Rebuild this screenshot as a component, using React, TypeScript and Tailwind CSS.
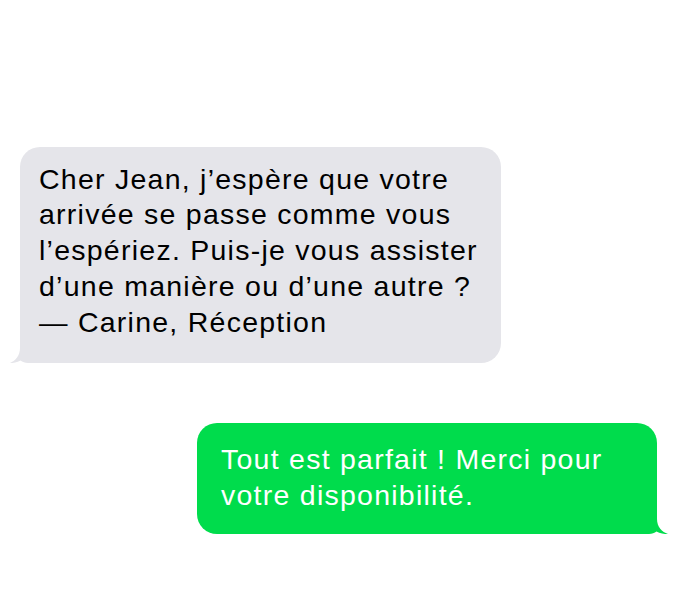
export default function App() {
  return (
    <div className="flex min-h-[616px] w-[689px] flex-col bg-white pt-[147px] font-['Liberation_Sans',Arial,sans-serif] text-[28.5px] leading-[35.75px] tracking-[1.25px]">
      {/* incoming */}
      <div className="relative ml-[20px] w-[481px] rounded-[20px] bg-[#e5e5ea] pb-[23px] pl-[19px] pr-[18px] pt-[14.5px] text-black">
        <p>
          Cher Jean, j’espère que votre arrivée se passe comme vous
          l’espériez. Puis-je vous assister d’une manière ou d’une autre ?
          <br />— Carine, Réception
        </p>
        <svg
          className="absolute bottom-0 left-[-10px]"
          width="30"
          height="24"
          viewBox="0 0 30 24"
        >
          <path
            d="M10 0 L30 0 L30 24 L18 24 C15 24 12.5 23 10.5 21.5 C7 23.5 3 24 0 24 C5 22 10 17 10 9 Z"
            fill="#e5e5ea"
          />
        </svg>
      </div>

      {/* outgoing */}
      <div className="relative ml-[197px] mt-[60px] w-[460px] rounded-[20px] bg-[#00dc4c] pb-[21px] pl-[24px] pr-[14px] pt-[18.5px] text-white">
        <p>Tout est parfait ! Merci pour votre disponibilité.</p>
        <svg
          className="absolute bottom-0 right-[-11px]"
          width="31"
          height="24"
          viewBox="0 0 31 24"
        >
          <path
            d="M20 0 L0 0 L0 24 L12 24 C15 24 17.5 23 19.5 21.5 C23 23.5 27 24 31 24 C25 22 20 17 20 9 Z"
            fill="#00dc4c"
          />
        </svg>
      </div>
    </div>
  );
}
